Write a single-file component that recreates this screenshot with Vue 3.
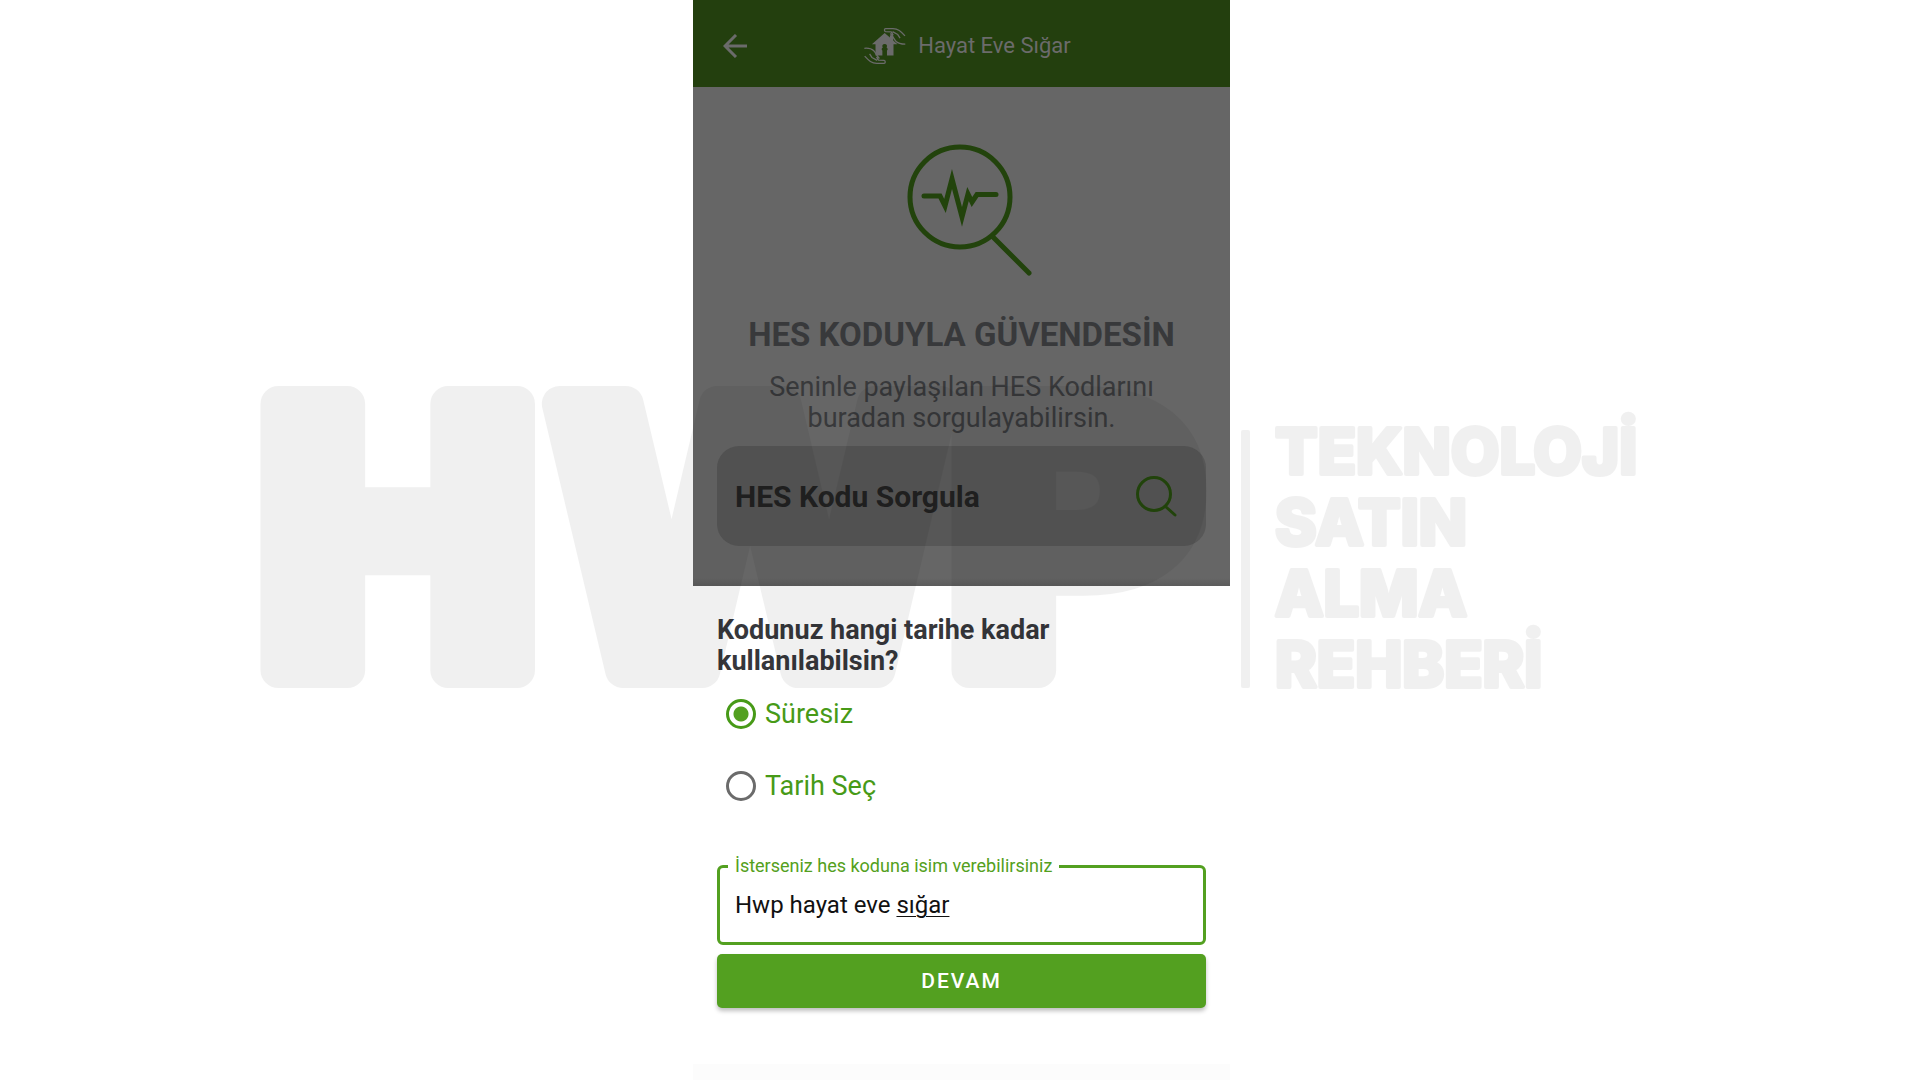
<template>
    <div class="page">
        <main class="phone">
            <!-- top bar -->
            <header class="topbar">
                <button class="back" type="button" aria-label="Geri">
                    <svg viewBox="0 0 24 24">
                        <path d="M24 12H2M13 1L2 12l11 11" />
                    </svg>
                </button>
                <div class="brand">
                    <svg class="brand-logo" viewBox="38 32 128 116">
                        <path class="house"
                            d="M101 50L62 85H73V119H94V104C91 101 91 97 95 95C92 88 95 84 101 84C107 84 110 88 107 95C111 97 111 101 108 104V119H128V85H140L127 73V57H117V64Z" />
                        <path class="hand"
                            d="M163 59C150 45 142 37 126 37H104C99 37 99 45 104 46L121 47L127 57M125 46L141 55L148 66M118 52C126 59 129 69 136 76C142 82 151 84 164 84" />
                        <path class="hand"
                            d="M40 121C53 135 61 143 77 143H99C104 143 104 135 99 134L82 133L76 123M78 134L62 125L55 114M85 128C77 121 74 111 67 104C61 98 52 96 39 97" />
                    </svg>
                    <span>Hayat Eve Sığar</span>
                </div>
            </header>

            <!-- hes code query -->
            <section class="hero">
                <svg class="hero-icon" viewBox="0 0 126 132">
                    <circle cx="53" cy="53" r="50" />
                    <path class="round" d="M86 93L122 129" />
                    <path class="pulse" d="M17 52H33L38 62L45 35L55 73L61 50L65 58L70 50.500H89" />
                </svg>
                <h1 class="hero-title">HES KODUYLA GÜVENDESİN</h1>
                <p class="hero-text">
                    Seninle paylaşılan HES Kodlarını<br />
                    buradan sorgulayabilirsin.
                </p>
                <button class="query" type="button">
                    <span>HES Kodu Sorgula</span>
                    <svg viewBox="0 0 42 42">
                        <circle cx="18" cy="19" r="16.500" />
                        <path d="M30 32L39 40" />
                    </svg>
                </button>
            </section>

            <!-- bottom sheet -->
            <form class="sheet" @submit.prevent>
                <h2 class="question">Kodunuz hangi tarihe kadar<br />kullanılabilsin?</h2>

                <div class="options">
                    <label v-for="o in options" :key="o.value" class="option">
                        <input type="radio" name="duration" :value="o.value" v-model="duration" />
                        <span>{{ o.label }}</span>
                    </label>
                </div>

                <fieldset class="field">
                    <legend><label for="code-name">İsterseniz hes koduna isim verebilirsiniz</label></legend>
                    <div class="field-body">
                        <input id="code-name" type="text" v-model="codeName" spellcheck="false" autocomplete="off" />
                        <!-- underline below the word being typed -->
                        <div class="composing" aria-hidden="true">{{ typed.before }}<u>{{ typed.word }}</u></div>
                    </div>
                </fieldset>

                <button class="btn" type="submit">DEVAM</button>
            </form>
            <div class="navbar"></div>
        </main>

        <!-- watermark -->
        <svg class="watermark" viewBox="0 0 1920 1080">
            <text class="mark" x="245 549 936" y="670">HWP</text>
            <rect x="1241" y="430" width="9" height="258" rx="2" />
            <g class="tagline">
                <text x="1275" y="474">TEKNOLOJİ</text>
                <text x="1275" y="545">SATIN</text>
                <text x="1275" y="616">ALMA</text>
                <text x="1275" y="687">REHBERİ</text>
            </g>
        </svg>
    </div>
</template>

<script setup>
import { ref, computed } from "vue";

const options = [
    { value: "unlimited", label: "Süresiz" },
    { value: "date", label: "Tarih Seç" },
];

const duration = ref("unlimited");
const codeName = ref("Hwp hayat eve sığar");

const typed = computed(() => {
    const at = codeName.value.lastIndexOf(" ") + 1;
    return {
        before: codeName.value.slice(0, at),
        word: codeName.value.slice(at),
    };
});
</script>

<style>
body {
    margin: 0;
    background: #fff;
}
</style>

<style scoped>
* {
    box-sizing: border-box;
}

.page {
    position: relative;
    display: flex;
    justify-content: center;
    min-height: 100vh;
    padding-left: 3px;
    font-family: Roboto, "Liberation Sans", sans-serif;
}

.phone {
    display: flex;
    flex-direction: column;
    width: 100%;
    max-width: 537px;
}

button {
    border: none;
    font-family: inherit;
    cursor: pointer;
}

/* top bar */
.topbar {
    display: flex;
    align-items: center;
    height: 87px;
    padding: 4px 42px 0 30px;
    background: #233f0e;
    color: #6b6b6b;
}

.back {
    padding: 0;
    background: none;
}

.back svg {
    display: block;
    width: 24px;
    height: 24px;
    fill: none;
    stroke: #6b6b6b;
    stroke-width: 3;
}

.brand {
    flex: 1;
    display: flex;
    align-items: center;
    justify-content: center;
    gap: 12px;
    font-size: 22px;
}

.brand-logo {
    width: 42px;
    height: 38px;
}

.house {
    fill: #6b6b6b;
}

.hand {
    fill: none;
    stroke: #6b6b6b;
    stroke-width: 4;
    stroke-linejoin: round;
}

/* hero */
.hero {
    display: flex;
    flex-direction: column;
    align-items: center;
    padding: 57px 24px 40px;
    background: linear-gradient(to top, #5c5c5c, #666 8px);
    text-align: center;
}

.hero-icon {
    width: 126px;
    height: 132px;
    margin-left: 16px;
    fill: none;
    stroke: #22430c;
    stroke-width: 5;
}

.round {
    stroke-linecap: round;
}

.pulse {
    stroke-linecap: round;
    stroke-miterlimit: 10;
}

.hero-title {
    margin: 39px 0 0;
    font-size: 33px;
    line-height: 40px;
    color: #38393b;
}

.hero-text {
    margin: 17px 0 12px;
    font-size: 27px;
    line-height: 31px;
    color: #38393b;
}

.query {
    display: flex;
    align-items: center;
    justify-content: space-between;
    width: 100%;
    height: 100px;
    padding: 0 28px 0 18px;
    border-radius: 22px;
    background: #575757;
    color: #212121;
    font-size: 30px;
    font-weight: 700;
}

.query svg {
    width: 42px;
    height: 42px;
    fill: none;
    stroke: #24480c;
    stroke-width: 3;
    stroke-linecap: round;
}

/* sheet */
.sheet {
    flex: 1;
    padding: 29px 24px 0;
    background: #fff;
}

.question {
    margin: 0;
    font-size: 27px;
    line-height: 31px;
    color: #36373b;
}

.options {
    display: flex;
    flex-direction: column;
    gap: 32px;
    padding: 17px 9px 0;
}

.option {
    display: flex;
    align-items: center;
    gap: 9px;
    font-size: 27px;
    line-height: 40px;
    color: #479a17;
}

.option input {
    appearance: none;
    width: 30px;
    height: 30px;
    margin: 0;
    border: 3px solid #6b6b6b;
    border-radius: 50%;
}

.option input:checked {
    border-color: #479a17;
    background: radial-gradient(circle, #53a020 7px, transparent 8px);
}

/* field */
.field {
    margin: 49px 0 9px;
    padding: 0 15px 17px;
    border: 3px solid #53a020;
    border-radius: 6px;
}

.field legend {
    margin-left: -7px;
    padding: 0 7px;
    font-size: 18px;
    line-height: 22px;
    color: #53a020;
}

.field-body {
    position: relative;
    font-size: 24px;
    line-height: 40px;
    margin-top: 8px;
}

.field-body input {
    display: block;
    width: 100%;
    height: 40px;
    padding: 0;
    border: none;
    outline: none;
    background: none;
    font: inherit;
    color: #111;
}

.composing {
    position: absolute;
    inset: 0;
    overflow: hidden;
    white-space: pre;
    color: transparent;
    pointer-events: none;
}

.composing u {
    text-decoration: underline 1px #111;
    text-underline-offset: 3px;
}

/* button */
.btn {
    display: block;
    width: 100%;
    height: 54px;
    border-radius: 5px;
    background: #53a020;
    box-shadow: 0 3px 4px rgba(0, 0, 0, 0.25);
    color: #fff;
    font-size: 21px;
    font-weight: 500;
    letter-spacing: 2px;
}

.navbar {
    height: 16px;
    background: #fcfcfc;
}

/* watermark */
.watermark {
    position: absolute;
    inset: 0;
    width: 100%;
    height: 100%;
    opacity: 0.053;
    pointer-events: none;
}

.watermark text {
    stroke: #000;
    stroke-linejoin: round;
}

.mark {
    font-family: "DejaVu Sans", sans-serif;
    font-size: 365px;
    font-weight: 700;
    stroke-width: 36px;
}

.tagline {
    font-family: Inter, sans-serif;
    font-size: 63px;
    font-weight: 800;
    stroke-width: 4px;
}
</style>
